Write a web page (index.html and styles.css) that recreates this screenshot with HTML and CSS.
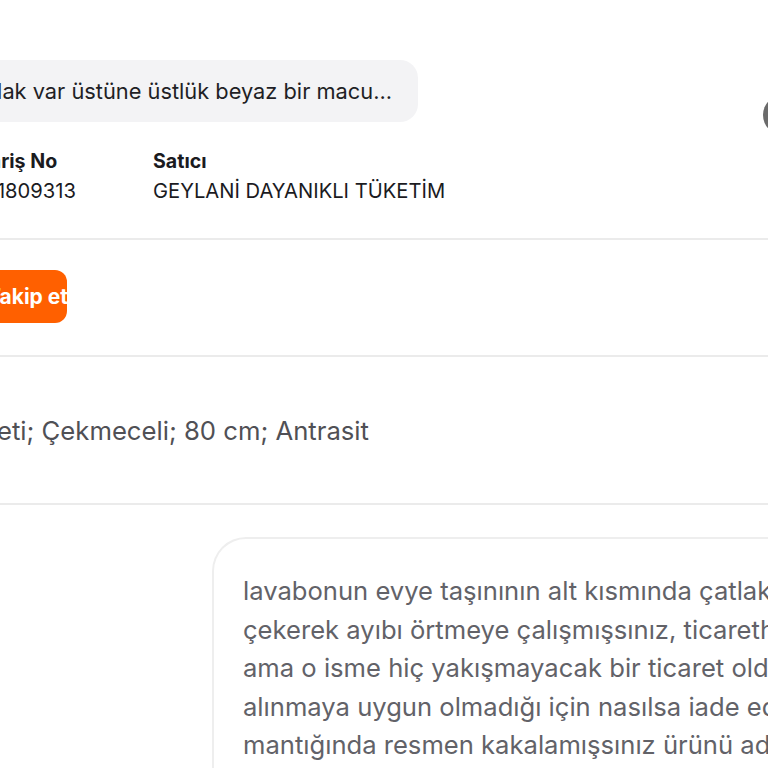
FILE: index.html
```html
<!DOCTYPE html>
<html lang="tr">
<head>
<meta charset="utf-8">
<link rel="stylesheet" href="styles.css">
</head>
<body>
<div class="page">
  <div class="bubble-row">
    <div class="bubble"><span class="bubble-text">alt kısmında çatlak var üstüne üstlük beyaz bir macu...</span></div>
  </div>
  <div class="fab"></div>
  <div class="info-row">
    <div class="info-left">
      <div class="info-col">
        <div class="info-label">Sipariş No</div>
        <div class="info-value">3451809313</div>
      </div>
    </div>
    <div class="info-col">
      <div class="info-label">Satıcı</div>
      <div class="info-value">GEYLANİ DAYANIKLI TÜKETİM</div>
    </div>
  </div>
  <hr class="divider">
  <div class="btn-row">
    <div class="follow-btn"><span>Takip et</span></div>
  </div>
  <hr class="divider">
  <div class="product-row">
    <div class="product-name">Banyo Dolabı Seti; Çekmeceli; 80 cm; Antrasit</div>
  </div>
  <hr class="divider">
  <div class="review-card">
    <p class="review-text">lavabonun evye taşınının alt kısmında çatlak var üstüne üstlük beyaz bir macun<br>çekerek ayıbı örtmeye çalışmışsınız, ticarethane ismi taşıyorsunuz<br>ama o isme hiç yakışmayacak bir ticaret oldu bu, ürün geri<br>alınmaya uygun olmadığı için nasılsa iade edilemez diye<br>mantığında resmen kakalamışsınız ürünü adam gibi</p>
  </div>
</div>
</body>
</html>
```

FILE: styles.css
```css
html, body {
  margin: 0;
  padding: 0;
  background: #ffffff;
  overflow: hidden;
  width: 768px;
  height: 768px;
}
body {
  font-family: Inter, "Noto Sans", sans-serif;
  color: #1b1b1f;
}
.page {
  position: relative;
  width: 768px;
  height: 768px;
  overflow: hidden;
}
.bubble-row {
  display: flex;
  justify-content: flex-end;
  width: 418px;
  margin-top: 60px;
}
.bubble {
  display: flex;
  justify-content: flex-end;
  align-items: center;
  flex: none;
  width: 460px;
  height: 62px;
  padding-right: 26px;
  box-sizing: border-box;
  background: #f3f3f5;
  border-radius: 18px;
  overflow: hidden;
}
.bubble-text {
  flex: none;
  white-space: nowrap;
  font-size: 21.8px;
  color: #1f1f25;
}
.fab {
  position: absolute;
  left: 763px;
  top: 95px;
  width: 40px;
  height: 40px;
  border-radius: 50%;
  background: #6b6b6b;
}
.info-row {
  display: flex;
  gap: 77px;
  margin-top: 26px;
}
.info-left {
  display: flex;
  justify-content: flex-end;
  width: 76px;
  flex: none;
}
.info-col {
  flex: none;
  display: flex;
  flex-direction: column;
  gap: 4px;
  white-space: nowrap;
}
.info-label {
  font-weight: 700;
  font-size: 19.6px;
  line-height: 26px;
  color: #1b1b1f;
}
.info-value {
  font-size: 20.2px;
  line-height: 26px;
  color: #1b1b1f;
}
.divider {
  border: none;
  height: 2px;
  background: #ebebeb;
  margin: 0;
}
.info-row + .divider {
  margin-top: 34px;
}
.btn-row {
  display: flex;
  justify-content: flex-end;
  width: 67px;
  margin: 30px 0 32px 0;
}
.follow-btn {
  flex: none;
  display: flex;
  align-items: center;
  justify-content: flex-end;
  width: 130px;
  height: 53px;
  border-radius: 12px;
  background: #ff6000;
  overflow: hidden;
}
.follow-btn span {
  color: #ffffff;
  font-weight: 700;
  font-size: 21px;
  white-space: nowrap;
  margin-right: -1px;
}
.product-row {
  display: flex;
  justify-content: flex-end;
  width: 369px;
  height: 146px;
  align-items: center;
}
.product-name {
  flex: none;
  white-space: nowrap;
  font-size: 25.7px;
  color: #505055;
}
.review-card {
  margin: 32px 0 0 212px;
  height: 300px;
  border: 2px solid #eeeeee;
  border-right: none;
  border-radius: 34px 0 0 0;
  padding: 33px 0 0 29px;
}
.review-text {
  margin: 0;
  white-space: nowrap;
  font-size: 25.6px;
  line-height: 38.5px;
  color: #626268;
}
```
